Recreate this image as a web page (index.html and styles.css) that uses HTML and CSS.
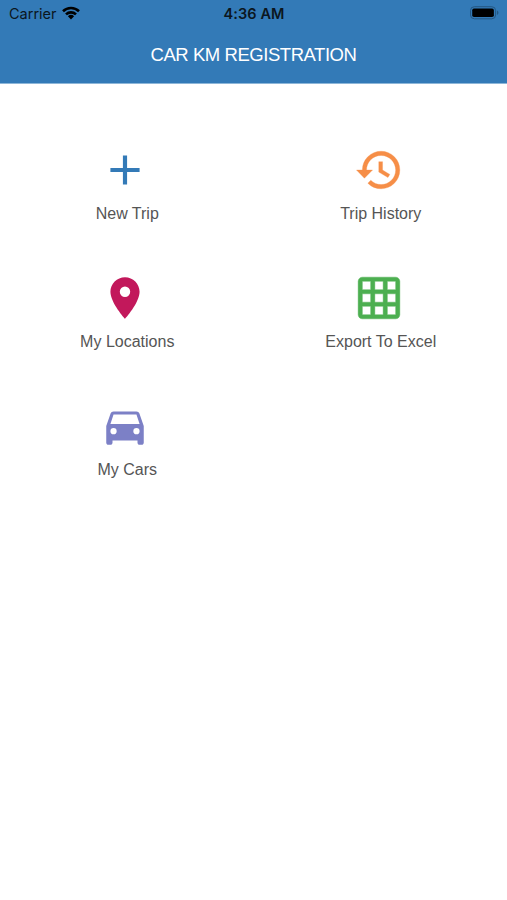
FILE: index.html
```html
<!DOCTYPE html>
<html lang="en">
<head>
<meta charset="utf-8">
<meta name="viewport" content="width=device-width, initial-scale=1">
<title>Car KM Registration</title>
<link rel="stylesheet" href="styles.css">
</head>
<body>
<header class="header">
  <div class="status">
    <div class="status-left">
      <span class="carrier">Carrier</span>
      <svg class="wifi" viewBox="0 0 18 14"><g fill="none" stroke="#000" stroke-width="2.6"><path d="M1 5.2a11.5 11.5 0 0 1 16 0"/><path d="M4 8.4a7.2 7.2 0 0 1 10 0"/></g><path d="M9 13.5 5.9 10.3a4.5 4.5 0 0 1 6.200 0z"/></svg>
    </div>
    <span class="time">4:36 AM</span>
    <div class="status-right">
      <svg class="battery" viewBox="0 0 30 14"><rect x=".5" y=".5" width="26" height="12.500" rx="4" fill="none" stroke="#235580"/><rect x="2.300" y="2.300" width="22.400" height="8.900" rx="1.800"/><path d="M28 4.500a2.500 2.500 0 0 1 0 4.500z" fill="#235580"/></svg>
    </div>
  </div>
  <h1 class="title">CAR KM REGISTRATION</h1>
</header>
<main class="menu">
  <a class="item"><svg class="icon plus" viewBox="0 0 24 24"><path d="M19 13h-6v6h-2v-6H5v-2h6V5h2v6h6v2z"/></svg><span class="label">New Trip</span></a>
  <a class="item"><svg class="icon history" viewBox="0 0 24 24"><path d="M13 3a9 9 0 0 0-9 9H1.200l3.800 3.950L8.900 12H6c0-3.870 3.130-7 7-7s7 3.130 7 7-3.130 7-7 7c-1.930 0-3.680-.790-4.940-2.060l-1.420 1.420A8.954 8.954 0 0 0 13 21a9 9 0 0 0 0-18zm-1.100 5v5l4.380 2.600.920-1.500-3.500-2.080V8H11.900z"/></svg><span class="label">Trip History</span></a>
  <a class="item"><svg class="icon pin" viewBox="0 0 24 24"><path d="M12 2C8.130 2 5 5.130 5 9c0 5.250 7 13 7 13s7-7.750 7-13c0-3.870-3.130-7-7-7zm0 9.500a2.500 2.500 0 0 1 0-5 2.500 2.500 0 0 1 0 5z"/></svg><span class="label">My Locations</span></a>
  <a class="item"><svg class="icon grid" viewBox="0 0 24 24"><path d="M20 2H4c-1.100 0-2 .900-2 2v16c0 1.100.900 2 2 2h16c1.100 0 2-.900 2-2V4c0-1.100-.900-2-2-2zM8 20H4v-4h4v4zm0-6H4v-4h4v4zm0-6H4V4h4v4zm6 12h-4v-4h4v4zm0-6h-4v-4h4v4zm0-6h-4V4h4v4zm6 12h-4v-4h4v4zm0-6h-4v-4h4v4zm0-6h-4V4h4v4z"/></svg><span class="label">Export To Excel</span></a>
  <a class="item"><svg class="icon car" viewBox="0 0 24 24"><path d="M18.920 6C18.720 5.420 18.160 5 17.500 5h-11c-.660 0-1.220.420-1.420 1L3 12v8c0 .550.450 1 1 1h1c.550 0 1-.450 1-1v-1h12v1c0 .550.450 1 1 1h1c.550 0 1-.450 1-1v-8l-2.080-6zM6.500 16a1.500 1.500 0 1 1 0-3 1.500 1.500 0 0 1 0 3zm11 0a1.500 1.500 0 1 1 0-3 1.500 1.500 0 0 1 0 3zM5 11l1.500-4.500h11L19 11H5z"/></svg><span class="label">My Cars</span></a>
</main>
</body>
</html>
```
FILE: styles.css
```css
* { box-sizing: border-box; }
body { margin: 0; min-height: 900px; background: #fff; font-family: "Liberation Sans", Arial, sans-serif; }
.header { height: 84px; background: #337ab7; border-bottom: 1px solid #8db6d8; }
.status { display: grid; grid-template-columns: 1fr auto 1fr; align-items: center; height: 27px; padding: 0 8px 0 9px; font-family: Inter, sans-serif; font-size: 14.500px; color: #0b1620; }
.status-left { display: flex; align-items: center; gap: 6px; }
.status-right { display: flex; justify-content: flex-end; }
.wifi { width: 18px; height: 14px; margin: -2px 0 0 -1px; }
.battery { width: 29px; height: 14px; margin-top: -1px; }
.time { font-weight: 600; letter-spacing: .1px; }
.title { margin: 0; padding-top: 16px; font-size: 18.500px; line-height: 24px; font-weight: 400; letter-spacing: -.45px; text-align: center; color: #fff; }
.menu { display: grid; grid-template-columns: 1fr 1fr; grid-auto-rows: 128px; padding-top: 60.600px; }
.item { display: flex; flex-direction: column; align-items: center; }
.icon { width: 50px; height: 50px; margin-right: 3.500px; }
.label { margin-top: 9px; padding-left: 1px; font-size: 16px; line-height: 20px; color: #555; }
.plus { fill: #337ab7; }
.history { fill: #f68e47; stroke: #f68e47; stroke-width: .15; }
.pin { fill: #c2185b; }
.grid { fill: #4caf50; stroke: #4caf50; stroke-width: .2; }
.car { fill: #7c80c6; }
```
